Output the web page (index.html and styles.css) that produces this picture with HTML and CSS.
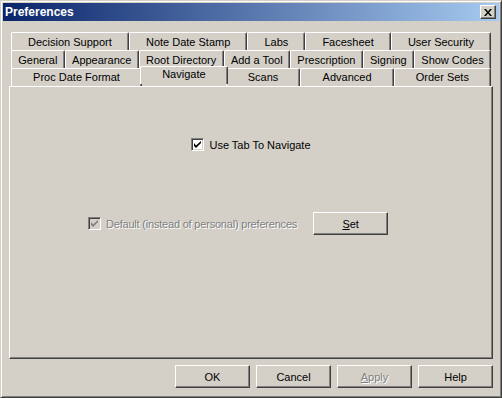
FILE: index.html
```html
<!DOCTYPE html>
<html lang="en">
<head>
    <meta charset="UTF-8">
    <title>Preferences</title>
    <link rel="stylesheet" href="styles.css">
</head>
<body>
    <div class="window">
        <!-- Title bar -->
        <div class="titlebar">
            <span class="title">Preferences</span>
            <button class="close-btn" aria-label="Close">
                <svg width="8" height="7" viewBox="0 0 8 7">
                    <path d="M0 0h2l2 2.5L6 0h2L5 3.5 8 7H6L4 4.5 2 7H0l3-3.5z" fill="#000"/>
                </svg>
            </button>
        </div>

        <div class="dialog">
            <!-- Tab rows -->
            <div class="tabs">
                <div class="tab-row">
                    <div class="tab">Decision Support</div>
                    <div class="tab">Note Date Stamp</div>
                    <div class="tab">Labs</div>
                    <div class="tab">Facesheet</div>
                    <div class="tab">User Security</div>
                </div>
                <div class="tab-row">
                    <div class="tab">General</div>
                    <div class="tab">Appearance</div>
                    <div class="tab">Root Directory</div>
                    <div class="tab">Add a Tool</div>
                    <div class="tab">Prescription</div>
                    <div class="tab">Signing</div>
                    <div class="tab">Show Codes</div>
                </div>
                <div class="tab-row">
                    <div class="tab">Proc Date Format</div>
                    <div class="tab selected">Navigate</div>
                    <div class="tab">Scans</div>
                    <div class="tab">Advanced</div>
                    <div class="tab">Order Sets</div>
                </div>
            </div>

            <!-- Tab page -->
            <div class="panel">
                <label class="check-row centered">
                    <span class="checkbox"><svg width="7" height="7" viewBox="0 0 7 7"><path d="M0 2v3l2 2 5-5V-0L2 4.5z" fill="#000"/></svg></span>
                    <span>Use Tab To Navigate</span>
                </label>

                <div class="default-row">
                    <label class="check-row disabled">
                        <span class="checkbox"><svg width="7" height="7" viewBox="0 0 7 7"><path d="M0 2v3l2 2 5-5V-0L2 4.5z" fill="#808080"/></svg></span>
                        <span class="disabled-text narrow">Default (instead of personal) preferences</span>
                    </label>
                    <button class="btn set-btn"><u>S</u>et</button>
                </div>
            </div>

            <!-- Dialog buttons -->
            <div class="buttons">
                <button class="btn">OK</button>
                <button class="btn">Cancel</button>
                <button class="btn"><span class="disabled-text"><u>A</u>pply</span></button>
                <button class="btn">Help</button>
            </div>
        </div>
    </div>
</body>
</html>
```

FILE: styles.css
```css
/* Classic dialog look */
body, html {
    margin: 0;
    height: 100%;
    font-family: "Liberation Sans", Arial, sans-serif;
    font-size: 11px;
    color: #000;
    background: #d4d0c8;
}

.window {
    width: 502px;
    height: 398px;
    box-sizing: border-box;
    background: #d4d0c8;
    border: 1px solid;
    border-color: #d4d0c8 #404040 #404040 #d4d0c8;
    box-shadow: inset 1px 1px 0 #fff, inset -1px -1px 0 #808080;
    padding: 2px;
    display: flex;
    flex-direction: column;
}

.titlebar {
    height: 18px;
    display: flex;
    align-items: center;
    justify-content: space-between;
    padding: 0 3px 0 2px;
    background: linear-gradient(to right, #0a246a, #a6caf0);
}

.title {
    color: #fff;
    font-weight: bold;
    font-size: 12px;
}

.close-btn {
    width: 16px;
    height: 14px;
    padding: 0;
    display: flex;
    align-items: center;
    justify-content: center;
    background: #d4d0c8;
    border: 1px solid;
    border-color: #fff #404040 #404040 #fff;
    box-shadow: inset -1px -1px 0 #808080;
}

.dialog {
    flex: 1;
    padding: 11px 6px 0 6px;
    display: flex;
    flex-direction: column;
}

/* Tabs */
.tabs {
    padding: 0 2px;
}

.tab-row {
    display: flex;
    height: 18px;
}

.tab {
    flex: 1 1 auto;
    box-sizing: border-box;
    height: 19px;
    padding: 0 6px 1px 6px;
    display: flex;
    align-items: center;
    justify-content: center;
    white-space: nowrap;
    background: #d4d0c8;
    border-left: 1px solid #fff;
    border-top: 1px solid #fff;
    border-right: 1px solid #404040;
    border-radius: 2px 2px 0 0;
    box-shadow: inset -1px 0 0 #808080;
}

.tab-row:last-child .tab {
    height: 18px;
}

.tab.selected {
    position: relative;
    z-index: 1;
    height: 21px;
    margin: -2px -2px 0 -2px;
    padding-bottom: 3px;
}

/* Page */
.panel {
    height: 273px;
    box-sizing: border-box;
    border: 1px solid;
    border-color: #fff #404040 #404040 #fff;
    box-shadow: inset -1px -1px 0 #808080;
    padding-top: 51px;
    display: flex;
    flex-direction: column;
}

.check-row {
    display: flex;
    align-items: center;
    gap: 5px;
    height: 13px;
}

.check-row.centered {
    align-self: center;
}

.checkbox {
    width: 13px;
    height: 13px;
    box-sizing: border-box;
    background: #fff;
    border: 1px solid;
    border-color: #808080 #fff #fff #808080;
    box-shadow: inset 1px 1px 0 #404040, inset -1px -1px 0 #d4d0c8;
    display: flex;
    align-items: center;
    justify-content: center;
}

.disabled .checkbox {
    background: #d4d0c8;
}

.disabled-text {
    color: #808080;
    text-shadow: 1px 1px 0 #fff;
}

.narrow {
    letter-spacing: -0.2px;
}

.default-row {
    margin-top: 61px;
    margin-left: 78px;
    display: flex;
    align-items: center;
    gap: 16px;
}

/* Buttons */
.btn {
    width: 75px;
    height: 23px;
    padding: 0;
    font-family: inherit;
    font-size: 11px;
    color: #000;
    background: #d4d0c8;
    border: 1px solid;
    border-color: #fff #404040 #404040 #fff;
    box-shadow: inset -1px -1px 0 #808080;
}

.buttons {
    display: flex;
    justify-content: flex-end;
    gap: 6px;
    margin-top: 6px;
}
```
